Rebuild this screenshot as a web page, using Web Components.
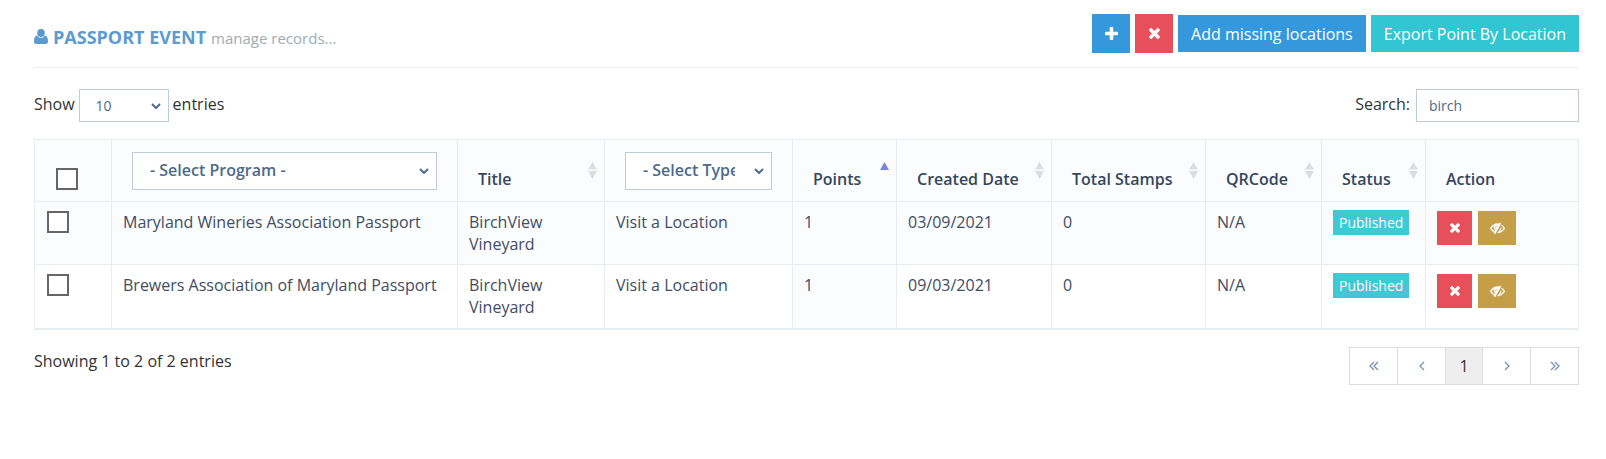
<!DOCTYPE html>
<html lang="en">
<head>
<meta charset="utf-8">
<title>Passport Event</title>
<style>
body{
  margin:0;background:#fff;color:#333;font:400 16px/22px "Open Sans",sans-serif;
  --chevron:url("data:image/svg+xml,%3Csvg xmlns='http://www.w3.org/2000/svg' width='10' height='6' viewBox='0 0 10 6'%3E%3Cpath d='M1 1l4 4 4-4' fill='none' stroke='%234d6b8a' stroke-width='2'/%3E%3C/svg%3E");
}
</style>
</head>
<body>
<passport-page></passport-page>
<script>
const ICONS = {
  user: ['0 0 14 15', 'M7 0a3.700 4 0 0 1 0 8.200a3.700 4 0 0 1 0-8.200zM3.200 6.500Q4.700 9 7 9t3.800-2.500C13 6.700 14 8.800 14 12.300Q14 15 11.700 15H2.300Q0 15 0 12.300C0 8.800 1 6.700 3.200 6.500z'],
  plus: ['0 0 1408 1408', 'M1408 608v192q0 40-28 68t-68 28h-416v416q0 40-28 68t-68 28h-192q-40 0-68-28t-28-68v-416h-416q-40 0-68-28t-28-68v-192q0-40 28-68t68-28h416v-416q0-40 28-68t68-28h192q40 0 68 28t28 68v416h416q40 0 68 28t28 68z'],
  times: ['110 366 1188 1188', 'M1298 1322q0 40-28 68l-136 136q-28 28-68 28t-68-28l-294-294-294 294q-28 28-68 28t-68-28l-136-136q-28-28-28-68t28-68l294-294-294-294q-28-28-28-68t28-68l136-136q28-28 68-28t68 28l294 294 294-294q28-28 68-28t68 28l136 136q28 28 28 68t-28 68l-294 294 294 294q28 28 28 68z'],
  hide: ['0 192 1792 1472', 'M555 1335l78-141q-87-63-136-159t-49-203q0-121 61-225-229 117-381 353 167 258 427 375zM944 704q0-20-14-34t-34-14q-125 0-214.500 89.500t-89.500 214.500q0 20 14 34t34 14 34-14 14-34q0-86 61-147t147-61q20 0 34-14t14-34zM1307 387q0 7-1 9-105 188-315 566t-316 567l-49 89q-10 16-28 16-12 0-134-70-16-10-16-28 0-12 44-87-143-65-263.500-173t-208.500-245q-20-31-20-69t20-69q153-235 380-371t496-136q89 0 180 17l54-97q10-16 28-16 5 0 18 6t31 15.500 33 18.500 31.500 18.500 19.500 11.500q16 10 16 27zM1344 960q0 139-79 253.500t-209 164.500l280-502q8 45 8 84zM1792 960q0 35-20 69-39 64-109 145-150 172-347.500 267t-419.500 95l74-132q212-18 392.500-137t301.500-307q-115-179-282-294l63-112q95 64 182.500 153t144.500 184q20 34 20 69z']
};

class FaIcon extends HTMLElement {
  connectedCallback() {
    const name = this.getAttribute('name');
    const [box, path] = ICONS[name];
    this.attachShadow({mode: 'open'}).innerHTML = `
      <style>
        :host{display:inline-block;line-height:0}
        svg{display:block;width:100%;height:100%;fill:currentColor}
        :host([name=hide]) path{stroke:currentColor;stroke-width:50}
      </style>
      <svg viewBox="${box}" aria-hidden="true"><path d="${path}"/></svg>`;
  }
}
customElements.define('fa-icon', FaIcon);

class ActionButton extends HTMLElement {
  connectedCallback() {
    const label = this.getAttribute('label');
    this.attachShadow({mode: 'open'}).innerHTML = `
      <style>
        :host{display:inline-flex}
        button{display:flex;align-items:center;justify-content:center;box-sizing:border-box;margin:0;border:0;border-radius:0;
          color:#fff;font:inherit;cursor:pointer;background:#3598dc;height:37px;padding:0 13px;white-space:nowrap}
        :host([tone=red]) button{background:#e7505a}
        :host([tone=teal]) button{background:#32c5d2}
        :host([tone=gold]) button{background:#c49f47}
        :host([size=icon]) button{width:38px;height:39px;padding:0}
        :host([size=small]) button{width:35px;height:34px;padding:0}
        :host([size=small][tone=gold]) button{width:38px}
      </style>
      <button type="button"${label ? ` aria-label="${label}"` : ''}><slot></slot></button>`;
  }
}
customElements.define('action-button', ActionButton);

class StatusBadge extends HTMLElement {
  connectedCallback() {
    this.attachShadow({mode: 'open'}).innerHTML = `
      <style>:host{display:inline-block;background:#3fc9d5;color:#fff;font-size:14px;line-height:25px;padding:0 6px}</style><slot></slot>`;
  }
}
customElements.define('status-badge', StatusBadge);

class PageHeader extends HTMLElement {
  connectedCallback() {
    this.attachShadow({mode: 'open'}).innerHTML = `
      <style>
        :host{display:flex;justify-content:space-between;align-items:center;height:67px;border-bottom:1px solid #eee}
        h1{display:flex;align-items:baseline;gap:5px;margin:8px 0 0;font-size:18px;font-weight:700;line-height:24px;color:#5b9bd1}
        h1 fa-icon{width:14px;height:15px}
        small{font-size:15px;font-weight:400;color:#9eacb4}
        div{display:flex;align-items:center;gap:5px}
      </style>
      <h1><fa-icon name="user"></fa-icon><span>PASSPORT EVENT</span><small>manage records...</small></h1>
      <div><slot></slot></div>`;
  }
}
customElements.define('page-header', PageHeader);

class TableTools extends HTMLElement {
  connectedCallback() {
    this.attachShadow({mode: 'open'}).innerHTML = `
      <style>
        :host{display:flex;justify-content:space-between;margin:21px 0 17px}
        label{display:flex;gap:4px;line-height:30px}
        label.search{gap:6px}
        select,input{box-sizing:border-box;height:33px;margin:0;border:1px solid #c2cad8;border-radius:0;background:#fff;color:#4d6b8a;
          font:400 14px/20px "Open Sans",sans-serif;padding:5px 12px}
        select{appearance:none;width:90px;padding:5px 16px;background:#fff var(--chevron) no-repeat right 7px center}
        input{width:163px}
      </style>
      <label>Show <select><option>10</option><option>25</option><option>50</option></select> entries</label>
      <label class="search">Search: <input type="text" value="birch"></label>`;
  }
}
customElements.define('table-tools', TableTools);

class SortMark extends HTMLElement {
  connectedCallback() {
    const asc = this.getAttribute('order') === 'asc';
    this.attachShadow({mode: 'open'}).innerHTML = `
      <style>:host{display:block}svg{display:block}</style>
      <svg width="9" height="17" viewBox="0 0 9 17" aria-hidden="true">
      ${asc ? '<path fill="#7d82dd" d="M0 8L4.500 0 9 8z"/>' : '<path fill="#dcdddf" d="M0 7.500L4.500 0 9 7.500zM0 9h9L4.500 17z"/>'}</svg>`;
  }
}
customElements.define('sort-mark', SortMark);

const COLUMNS = [76, 346, 147, 188, 104, 155, 154, 116, 104, 153];
const ROWS = [
  ['Maryland Wineries Association Passport', 'BirchView Vineyard', 'Visit a Location', '1', '03/09/2021', '0', 'N/A'],
  ['Brewers Association of Maryland Passport', 'BirchView Vineyard', 'Visit a Location', '1', '09/03/2021', '0', 'N/A']
];

class RecordsTable extends HTMLElement {
  connectedCallback() {
    const head = (t, order = '') => `<th scope="col">${t}<sort-mark order="${order}"></sort-mark></th>`;
    this.attachShadow({mode: 'open'}).innerHTML = `
      <style>
        :host{display:block}
        table{width:100%;table-layout:fixed;border-collapse:separate;border-spacing:0;border:1px solid #e7ecf1;border-bottom-width:2px;color:#3f4d63}
        th,td{box-sizing:border-box;text-align:left;border-left:1px solid #e7ecf1}
        th:first-child,td:first-child{border-left:0}
        th{position:relative;height:62px;padding:12px 20px 11px;vertical-align:bottom;font-weight:600;color:#36475c;background:#fbfcfe;border-bottom:1px solid #e7ecf1;white-space:nowrap}
        td{height:63px;padding:9px 11px;vertical-align:top;border-bottom:1px solid #e7ecf1}
        tr:last-child td{border-bottom-color:#fff}
        tbody tr:first-child td,td.sorted{background:#fbfcfe}
        th:first-child{padding-left:21px}
        td:first-child{padding-left:12px}
        th select{appearance:none;display:block;box-sizing:border-box;width:100%;height:38px;border:1px solid #c2cad8;border-radius:0;
          background:#fff var(--chevron) no-repeat right 7px center;color:#4d6b8a;font:inherit;padding:0 36px 2px 17px}
        input{appearance:none;display:block;box-sizing:border-box;width:22px;height:22px;margin:0;border:2px solid #666;background:#fff}
        sort-mark{position:absolute;right:7px;top:22px}
        td.actions div{display:flex;gap:6px}
        td.status{padding-top:8px;padding-right:0}
        .x{width:10px;height:10px}
        .eye{width:15px;height:12px}
      </style>
      <table>
        <colgroup>${COLUMNS.map(w => `<col style="width:${w}px">`).join('')}</colgroup>
        <thead><tr>
          <th scope="col"><input type="checkbox" aria-label="Select all"></th>
          <th scope="col"><select aria-label="Program"><option>- Select Program -</option></select></th>
          ${head('Title')}
          <th scope="col"><select aria-label="Type"><option>- Select Type -</option></select></th>
          ${head('Points', 'asc')}${head('Created Date')}${head('Total Stamps')}${head('QRCode')}${head('Status')}
          <th scope="col">Action</th>
        </tr></thead>
        <tbody>${ROWS.map(r => `<tr>
          <td><input type="checkbox" aria-label="Select ${r[0]}"></td>
          ${r.map((c, i) => `<td${i === 3 ? ' class="sorted"' : ''}>${c}</td>`).join('')}
          <td class="status"><status-badge>Published</status-badge></td>
          <td class="actions"><div>
            <action-button size="small" tone="red" label="Delete"><fa-icon class="x" name="times"></fa-icon></action-button>
            <action-button size="small" tone="gold" label="Unpublish"><fa-icon class="eye" name="hide"></fa-icon></action-button>
          </div></td></tr>`).join('')}</tbody>
      </table>`;
  }
}
customElements.define('records-table', RecordsTable);

class TablePager extends HTMLElement {
  connectedCallback() {
    const link = (label, d) => `<a href="#" aria-label="${label}"><svg width="10" height="10" viewBox="0 0 10 10" aria-hidden="true"><path d="${d}"/></svg></a>`;
    this.attachShadow({mode: 'open'}).innerHTML = `
      <style>
        :host{display:flex;justify-content:space-between;align-items:flex-start;margin-top:17px}
        p{margin:3px 0 0}
        nav{display:flex;border:1px solid #ddd}
        a{display:flex;align-items:center;justify-content:center;box-sizing:border-box;width:48px;height:36px;border-left:1px solid #ddd;color:#333;text-decoration:none}
        a:first-child{border-left:0;width:47px}
        a.current{width:37px;background:#eee}
        svg{fill:none;stroke:#7394b8;stroke-width:1.300}
      </style>
      <p>Showing 1 to 2 of 2 entries</p>
      <nav aria-label="Pages">
        ${link('First', 'M5 1L1 5l4 4M9 1L5 5l4 4')}${link('Previous', 'M7 1L3 5l4 4')}
        <a class="current" href="#" aria-current="page">1</a>
        ${link('Next', 'M3 1l4 4-4 4')}${link('Last', 'M1 1l4 4-4 4M5 1l4 4-4 4')}
      </nav>`;
  }
}
customElements.define('table-pager', TablePager);

class PassportPage extends HTMLElement {
  connectedCallback() {
    this.attachShadow({mode: 'open'}).innerHTML = `
      <style>
        :host{display:block;padding:0 27px 40px 34px}
        .p{width:13px;height:13px}
        .x{width:11px;height:11px}
      </style>
      <page-header>
        <action-button size="icon" label="Add"><fa-icon class="p" name="plus"></fa-icon></action-button>
        <action-button size="icon" tone="red" label="Delete"><fa-icon class="x" name="times"></fa-icon></action-button>
        <action-button>Add missing locations</action-button>
        <action-button tone="teal">Export Point By Location</action-button>
      </page-header>
      <table-tools></table-tools>
      <records-table></records-table>
      <table-pager></table-pager>`;
  }
}
customElements.define('passport-page', PassportPage);
</script>
</body>
</html>
